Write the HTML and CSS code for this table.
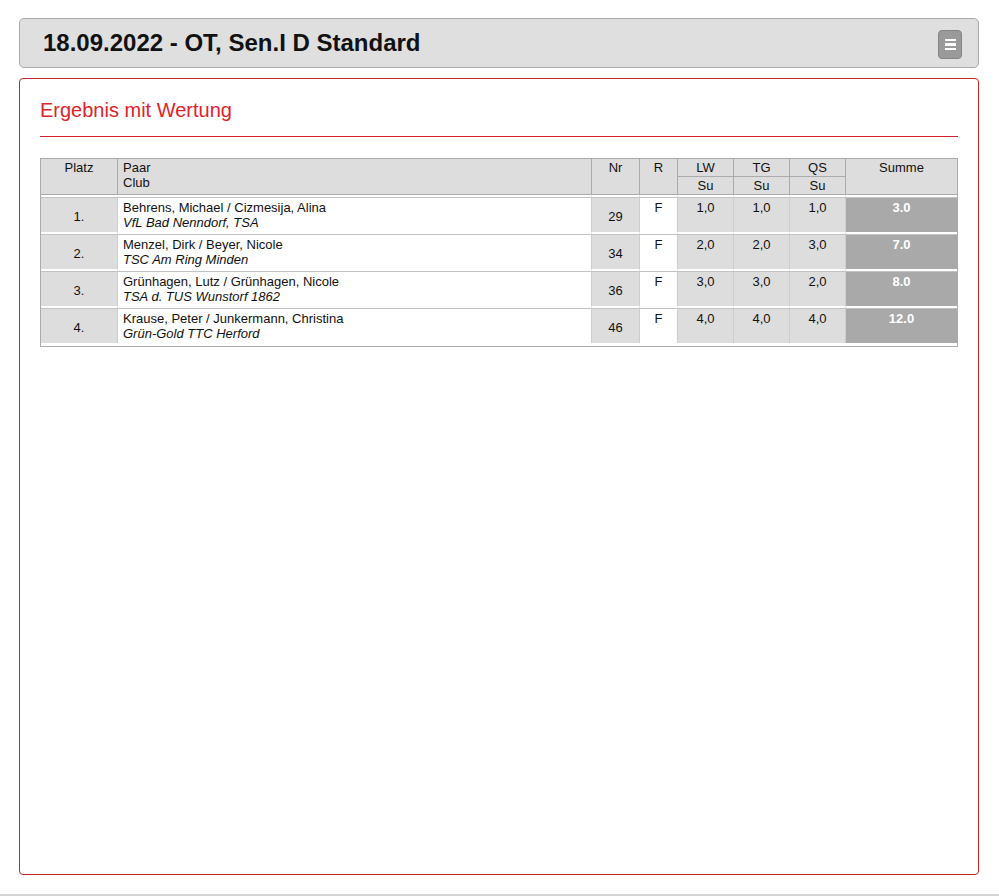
FILE: index.html
```html
<!DOCTYPE html>
<html lang="de">
<head>
<meta charset="utf-8">
<title>18.09.2022 - OT, Sen.I D Standard</title>
<link rel="stylesheet" href="styles.css">
</head>
<body>
<div class="page">
  <header class="topbar">
    <h1 class="topbar-title">18.09.2022 - OT, Sen.I D Standard</h1>
    <button class="menu-btn" type="button" aria-label="Menü">
      <span class="menu-bar"></span><span class="menu-bar"></span><span class="menu-bar"></span>
    </button>
  </header>
  <main class="box">
    <h2 class="box-title">Ergebnis mit Wertung</h2>
    <div class="table-wrap">
      <table class="results">
        <colgroup>
          <col class="c-platz"><col class="c-paar"><col class="c-nr"><col class="c-r">
          <col class="c-d"><col class="c-d"><col class="c-d"><col class="c-sum">
        </colgroup>
        <thead>
          <tr>
            <th rowspan="2" class="h-center">Platz</th>
            <th rowspan="2" class="h-left">Paar<br>Club</th>
            <th rowspan="2" class="h-center">Nr</th>
            <th rowspan="2" class="h-center">R</th>
            <th class="h-center h-sub">LW</th>
            <th class="h-center h-sub">TG</th>
            <th class="h-center h-sub">QS</th>
            <th rowspan="2" class="h-center h-last">Summe</th>
          </tr>
          <tr>
            <th class="h-center">Su</th>
            <th class="h-center">Su</th>
            <th class="h-center">Su</th>
          </tr>
        </thead>
        <tbody>
          <tr>
            <td class="d-platz">1.</td>
            <td class="d-paar">Behrens, Michael / Cizmesija, Alina<br><i>VfL Bad Nenndorf, TSA</i></td>
            <td class="d-nr">29</td>
            <td class="d-r">F</td>
            <td class="d-val">1,0</td><td class="d-val">1,0</td><td class="d-val">1,0</td>
            <td class="d-sum">3.0</td>
          </tr>
          <tr>
            <td class="d-platz">2.</td>
            <td class="d-paar">Menzel, Dirk / Beyer, Nicole<br><i>TSC Am Ring Minden</i></td>
            <td class="d-nr">34</td>
            <td class="d-r">F</td>
            <td class="d-val">2,0</td><td class="d-val">2,0</td><td class="d-val">3,0</td>
            <td class="d-sum">7.0</td>
          </tr>
          <tr>
            <td class="d-platz">3.</td>
            <td class="d-paar">Grünhagen, Lutz / Grünhagen, Nicole<br><i>TSA d. TUS Wunstorf 1862</i></td>
            <td class="d-nr">36</td>
            <td class="d-r">F</td>
            <td class="d-val">3,0</td><td class="d-val">3,0</td><td class="d-val">2,0</td>
            <td class="d-sum">8.0</td>
          </tr>
          <tr>
            <td class="d-platz">4.</td>
            <td class="d-paar">Krause, Peter / Junkermann, Christina<br><i>Grün-Gold TTC Herford</i></td>
            <td class="d-nr">46</td>
            <td class="d-r">F</td>
            <td class="d-val">4,0</td><td class="d-val">4,0</td><td class="d-val">4,0</td>
            <td class="d-sum">12.0</td>
          </tr>
        </tbody>
      </table>
    </div>
  </main>
</div>
<footer class="footer-line"></footer>
</body>
</html>
```

FILE: styles.css
```css
* { box-sizing: border-box; }

html, body {
  margin: 0;
  padding: 0;
  background: #ffffff;
  font-family: "Liberation Sans", Arial, sans-serif;
  color: #111;
}

body {
  height: 100vh;
  display: flex;
  flex-direction: column;
}

.page {
  flex: 1;
  display: flex;
  flex-direction: column;
  padding: 18px 20px 0 19px;
}

.topbar {
  height: 50px;
  flex: none;
  display: flex;
  align-items: center;
  justify-content: space-between;
  background: #dfdfdf;
  border: 1px solid #ababab;
  border-radius: 5px;
  padding: 0 16px 0 23px;
}

.topbar-title {
  margin: 0;
  font-size: 24px;
  font-weight: bold;
  color: #111;
  line-height: 28px;
}

.menu-btn {
  width: 24px;
  height: 29px;
  margin-top: 3px;
  padding: 0;
  background: #9a9a9a;
  border: 1px solid #858585;
  border-radius: 4px;
  display: flex;
  flex-direction: column;
  align-items: center;
  justify-content: center;
  gap: 2px;
}

.menu-bar {
  display: block;
  width: 11px;
  height: 2.5px;
  background: #ffffff;
}

.box {
  flex: 1;
  margin-top: 10px;
  margin-bottom: 19px;
  border: 1px solid #c9232a;
  border-radius: 4px;
  padding: 20px 20px 0 20px;
}

.box-title {
  margin: 0;
  font-size: 20px;
  font-weight: normal;
  line-height: 23px;
  color: #e0222a;
  padding-bottom: 14px;
  border-bottom: 1px solid #d0222a;
}

.table-wrap {
  margin-top: 21px;
  border: 1px solid #ababab;
  padding-bottom: 3px;
}

.results {
  width: 100%;
  table-layout: fixed;
  border-collapse: separate;
  border-spacing: 0;
  font-size: 13px;
  line-height: 15px;
}

.c-platz { width: 77px; }
.c-paar { width: 474px; }
.c-nr { width: 48px; }
.c-r { width: 38px; }
.c-d { width: 56px; }
.c-sum { width: 111px; }

.results th {
  background: #dddddd;
  font-weight: normal;
  vertical-align: top;
  padding: 1px 5px 1px 5px;
  border-right: 1px solid #ababab;
  border-bottom: 1px solid #ababab;
  color: #111;
}

.results th.h-last { border-right: none; }
.h-center { text-align: center; }
.h-left { text-align: left; }

.results td {
  border-top: 2px solid #ffffff;
  box-shadow: inset 0 1px 0 #c2c2c2;
  border-right: 1px solid #cdcdcd;
  padding: 3px 5px 2px 5px;
  height: 37px;
  vertical-align: top;
  color: #111;
}

.results td.d-sum { border-right: none; }

.d-platz {
  background: #dddddd;
  text-align: center;
  vertical-align: middle !important;
  padding-top: 5px !important;
}

.d-paar {
  background: #ffffff;
  text-align: left;
}

.d-paar i { font-style: italic; }

.d-nr {
  background: #dddddd;
  text-align: center;
  vertical-align: middle !important;
  padding-top: 5px !important;
}

.d-r {
  background: #ffffff;
  text-align: center;
}

.d-val {
  background: #dddddd;
  text-align: center;
}

.d-sum {
  background: #a9a9a9;
  color: #ffffff !important;
  font-weight: bold;
  text-align: center;
}

.footer-line {
  height: 2px;
  flex: none;
  background: #d4d4d4;
}
```
